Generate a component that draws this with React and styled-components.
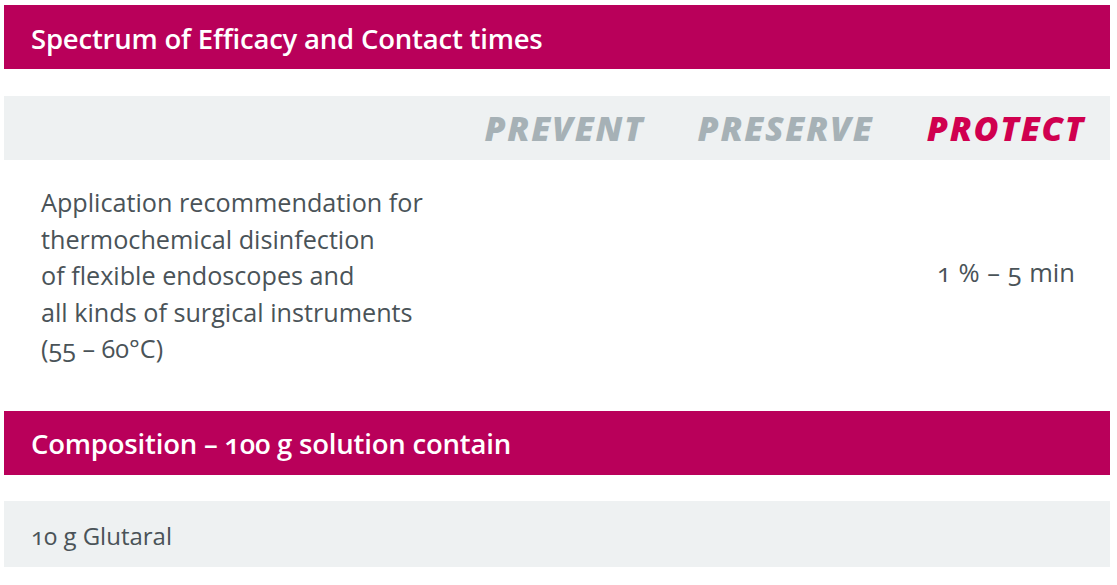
import React from "react";
import styled, { createGlobalStyle } from "styled-components";

const Global = createGlobalStyle`
  html, body { margin: 0; padding: 0; background: #ffffff; }
  body { font-family: "Open Sans", "Noto Sans", sans-serif; }
`;

const Page = styled.div`
  padding: 5px 7px 0 4px;
  display: flex;
  flex-direction: column;
`;

const SectionBar = styled.h2`
  margin: ${(p) => p.$top || 0}px 0 0;
  height: 64px;
  display: flex;
  align-items: center;
  padding: 2px 0 0 27px;
  box-sizing: border-box;
  background: #b9005a;
  color: #ffffff;
  font-family: "Open Sans", sans-serif;
  font-weight: 600;
  font-size: 27.5px;
  letter-spacing: -0.2px;
  font-variant-numeric: oldstyle-nums;
`;

const Table = styled.div`
  margin-top: 27px;
  display: grid;
  grid-template-columns: 1fr 221px 221px 214px;
`;

const HeadCell = styled.div`
  background: #eef1f2;
  height: 64px;
  display: flex;
  align-items: center;
  justify-content: center;
  padding-left: ${(p) => p.$shift || 0}px;
  font-family: "Open Sans", sans-serif;
  font-style: italic;
  font-weight: 800;
  font-size: 34px;
  letter-spacing: 1.7px;
  color: ${(p) => (p.$active ? "#d0004f" : "#a6b1b6")};
`;

const LabelCell = styled.div`
  padding: 24px 0 18px 37px;
  font-family: "Open Sans", sans-serif;
  font-size: 25.2px;
  line-height: 36.5px;
  color: #4a5358;
  font-variant-numeric: oldstyle-nums;
`;

const ValueCell = styled.div`
  display: flex;
  align-items: center;
  justify-content: center;
  padding-left: ${(p) => p.$shift || 0}px;
  font-family: "Open Sans", sans-serif;
  font-size: 25.5px;
  word-spacing: 1px;
  color: #4a5358;
  font-variant-numeric: oldstyle-nums;
`;

const ListRow = styled.div`
  margin-top: 26px;
  height: 66px;
  background: #eef1f2;
  display: flex;
  align-items: center;
  padding: 3px 0 0 27px;
  box-sizing: border-box;
  font-family: "Open Sans", sans-serif;
  font-size: 24px;
  color: #4a5358;
  font-variant-numeric: oldstyle-nums;
`;

export default function App() {
  return (
    <>
      <Global />
      <Page>
        <SectionBar>Spectrum of Efficacy and Contact times</SectionBar>
        <Table>
          <HeadCell />
          <HeadCell>PREVENT</HeadCell>
          <HeadCell>PRESERVE</HeadCell>
          <HeadCell $active $shift={6}>PROTECT</HeadCell>
          <LabelCell>
            Application recommendation for
            <br />
            thermochemical disinfection
            <br />
            of flexible endoscopes and
            <br />
            all kinds of surgical instruments
            <br />
            (55 – 60°C)
          </LabelCell>
          <ValueCell />
          <ValueCell />
          <ValueCell $shift={6}>1 % – 5 min</ValueCell>
        </Table>
        <SectionBar $top={26}>Composition – 100 g solution contain</SectionBar>
        <ListRow>10 g Glutaral</ListRow>
      </Page>
    </>
  );
}
